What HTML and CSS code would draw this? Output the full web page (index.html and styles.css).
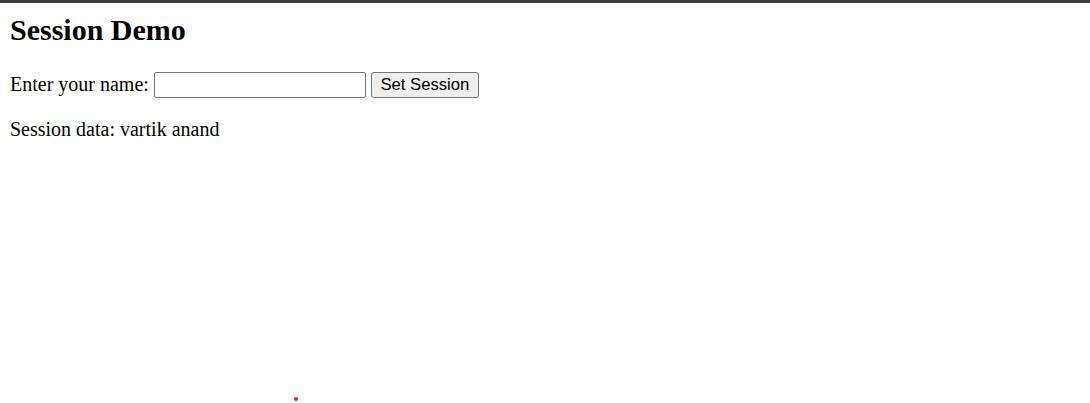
FILE: index.html
```html
<!DOCTYPE html>
<html>
<head>
<meta charset="utf-8">
<title>Session Demo</title>
<link rel="stylesheet" href="styles.css">
</head>
<body>
<div class="topbar"></div>
<main class="page">
  <h2 class="title">Session Demo</h2>
  <form class="form">
    <label class="label" for="name">Enter your name:</label>
    <input class="field" id="name" type="text">
    <button class="btn" type="button">Set Session</button>
  </form>
  <p class="data">Session data: vartik anand</p>
</main>
<span class="dot"></span>
</body>
</html>
```
FILE: styles.css
```css
html, body {
  margin: 0;
  padding: 0;
  background: #fff;
}
body {
  font-family: "Liberation Serif", "Times New Roman", serif;
  font-size: 20px;
  color: #000;
  position: relative;
  height: 403px;
  overflow: hidden;
}
.topbar {
  height: 3px;
  background: #3c3c3c;
}
.page {
  padding: 0 10px;
}
.title {
  font-size: 30px;
  font-weight: bold;
  margin: 9px 0 24px 0;
  line-height: 35px;
}
.form {
  margin: 0;
  display: flex;
  align-items: center;
  height: 28px;
}
.label {
  margin: 0 5px 2px 0;
}
.field {
  box-sizing: border-box;
  width: 212px;
  height: 26px;
  border: 1px solid #767676;
  border-radius: 2px;
  padding: 1px 2px;
  font-family: "Liberation Sans", Arial, sans-serif;
  font-size: 16.67px;
  margin: 0 5px 0 0;
}
.btn {
  box-sizing: border-box;
  height: 26px;
  width: 108px;
  background: #efefef;
  border: 1px solid #767676;
  border-radius: 3px;
  font-family: "Liberation Sans", Arial, sans-serif;
  font-size: 16.67px;
  color: #000;
  padding: 0 8px;
  margin: 0;
}
.data {
  margin: 19px 0 0 0;
  line-height: 23px;
}
.dot {
  position: absolute;
  left: 294px;
  top: 397px;
  width: 4px;
  height: 4px;
  border-radius: 50%;
  background: #e8202a;
}
```
